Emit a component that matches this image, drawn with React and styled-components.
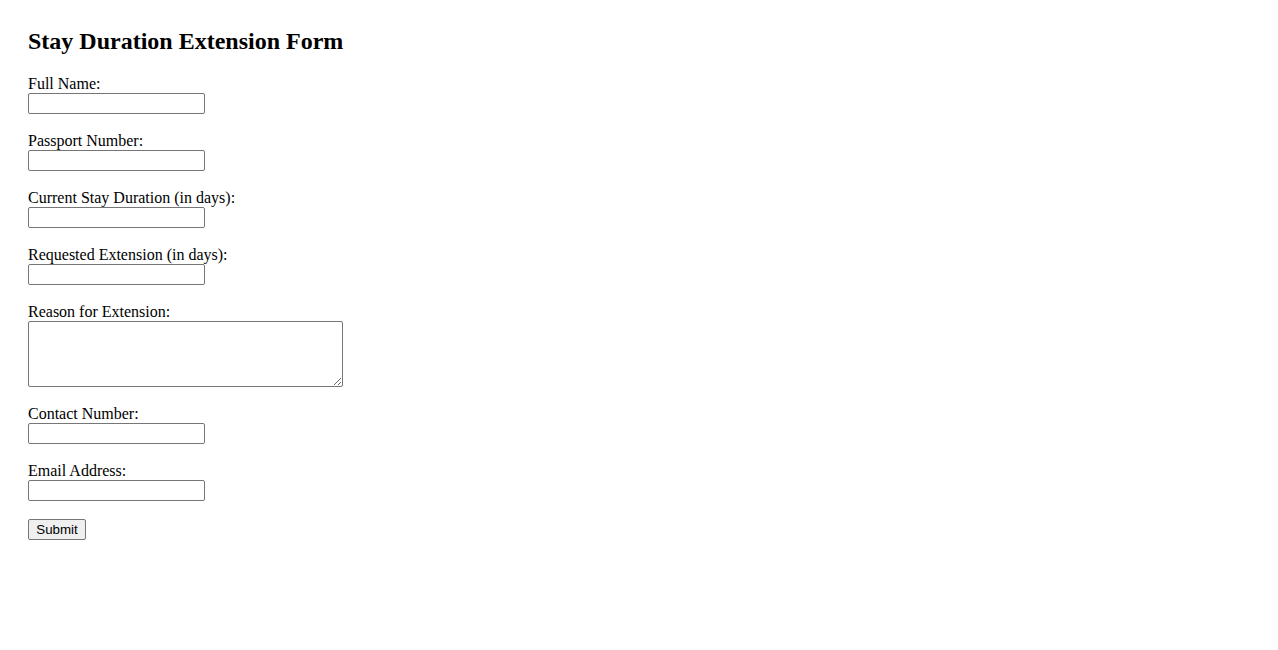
import React from "react";
import styled, { createGlobalStyle } from "styled-components";

const GlobalStyle = createGlobalStyle`
  html, body {
    margin: 0;
    padding: 0;
    background: #ffffff;
  }
  body {
    font-family: "Liberation Serif", "Times New Roman", serif;
    font-size: 16px;
    color: #000000;
  }
`;

const Page = styled.div`
  padding: 28px;
`;

const Title = styled.h2`
  margin: 0 0 20px 0;
  font-size: 24px;
  line-height: 27px;
  font-weight: bold;
`;

const Form = styled.form`
  display: flex;
  flex-direction: column;
  align-items: flex-start;
  gap: 18px;
`;

const Field = styled.div`
  display: flex;
  flex-direction: column;
  align-items: flex-start;
`;

const Label = styled.label`
  display: block;
  font-size: 16px;
  line-height: 18px;
`;

const TextInput = styled.input`
  box-sizing: border-box;
  width: 177px;
  height: 21px;
  margin: 0;
  padding: 1px 2px;
  border: 1px solid #767676;
  border-radius: 2px;
  background: #ffffff;
  font-family: "Liberation Sans", Arial, sans-serif;
  font-size: 13.333px;
`;

const TextArea = styled.textarea`
  box-sizing: border-box;
  width: 315px;
  height: 66px;
  margin: 0;
  padding: 2px;
  border: 1px solid #767676;
  border-radius: 2px;
  background: #ffffff;
  font-family: "Liberation Mono", monospace;
  font-size: 13.333px;
  resize: both;
  display: block;
`;

const SubmitButton = styled.button`
  box-sizing: border-box;
  width: 58px;
  height: 21px;
  margin: 0;
  padding: 1px 6px;
  border: 1px solid #767676;
  border-radius: 2px;
  background: #efefef;
  color: #000000;
  font-family: "Liberation Sans", Arial, sans-serif;
  font-size: 13.333px;
  line-height: 15px;
`;

const fields = [
  { id: "fullName", label: "Full Name:", type: "text" },
  { id: "passport", label: "Passport Number:", type: "text" },
  { id: "currentStay", label: "Current Stay Duration (in days):", type: "number" },
  { id: "extension", label: "Requested Extension (in days):", type: "number" },
  { id: "reason", label: "Reason for Extension:", area: true },
  { id: "contact", label: "Contact Number:", type: "tel" },
  { id: "email", label: "Email Address:", type: "email" },
];

export default function App() {
  return (
    <>
      <GlobalStyle />
      <Page>
        <Title>Stay Duration Extension Form</Title>
        <Form onSubmit={(e) => e.preventDefault()}>
          {fields.map((f) => (
            <Field key={f.id}>
              <Label htmlFor={f.id}>{f.label}</Label>
              {f.area ? (
                <TextArea id={f.id} name={f.id} />
              ) : (
                <TextInput id={f.id} name={f.id} type="text" />
              )}
            </Field>
          ))}
          <SubmitButton type="submit">Submit</SubmitButton>
        </Form>
      </Page>
    </>
  );
}
